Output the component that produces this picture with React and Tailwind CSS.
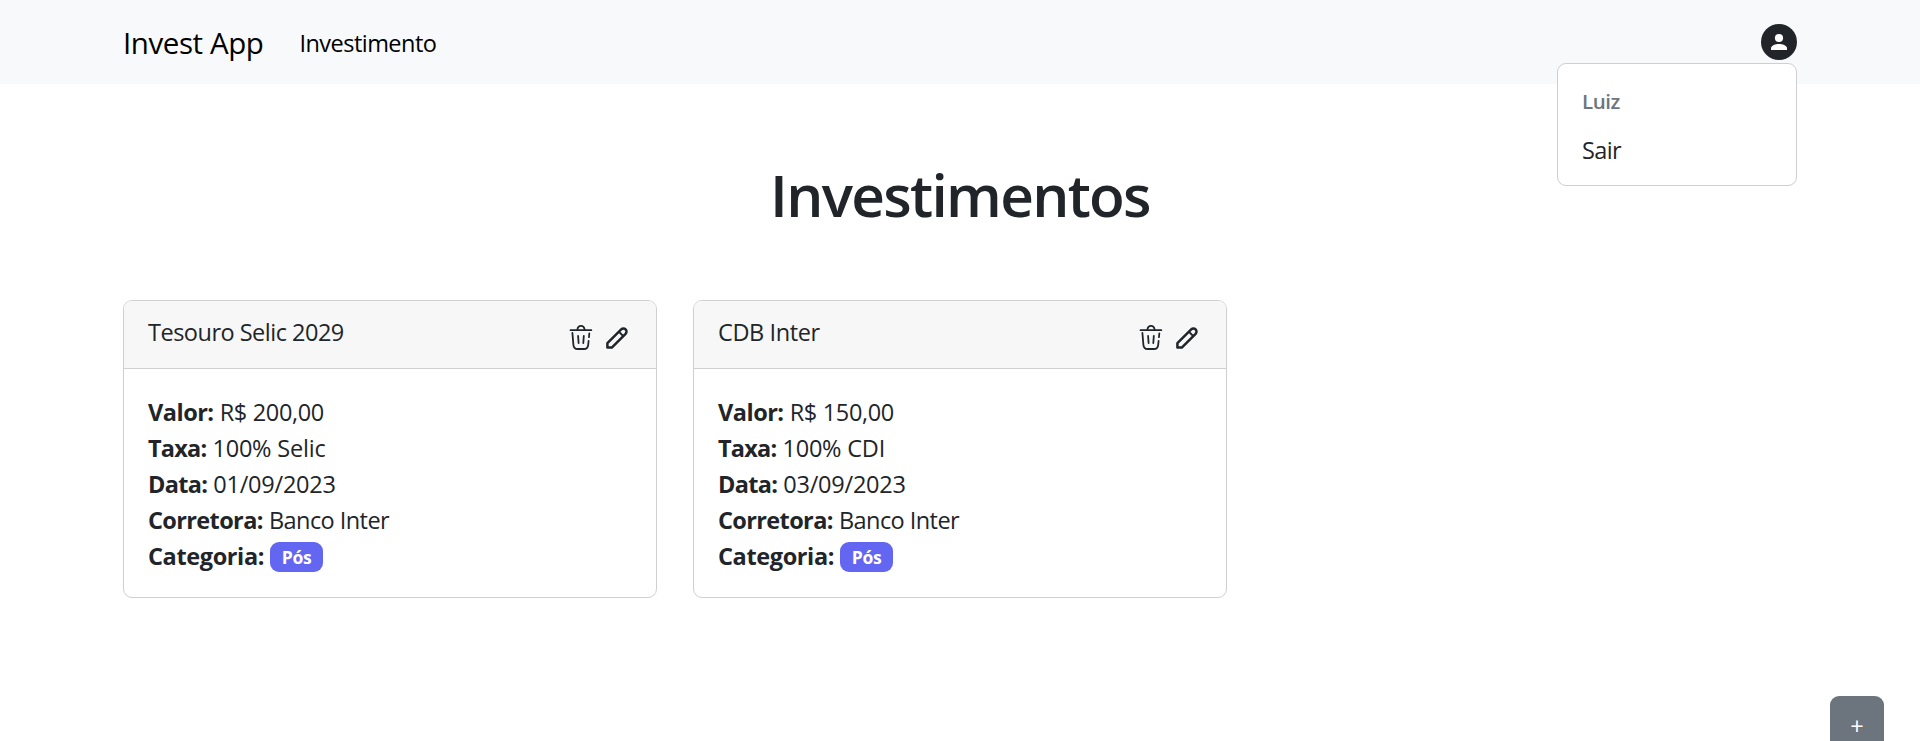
const investments = [
  {
    name: "Tesouro Selic 2029",
    nameTracking: "tracking-[-0.5px]",
    value: "R$ 200,00",
    rate: "100% Selic",
    date: "01/09/2023",
    broker: "Banco Inter",
    category: "Pós",
  },
  {
    name: "CDB Inter",
    nameTracking: "tracking-[-0.4px]",
    value: "R$ 150,00",
    rate: "100% CDI",
    date: "03/09/2023",
    broker: "Banco Inter",
    category: "Pós",
  },
];

function TrashIcon() {
  return (
    <svg className="h-7 w-6" viewBox="0 0 24 28" fill="none" stroke="currentColor" strokeWidth="1.8" strokeLinecap="round">
      <path d="M1.5 7.2H22.3" />
      <path d="M8.4 6.6C9 1.6 15 1.6 15.6 6.6" />
      <path d="M3.4 10L4.4 21.8C4.7 24.8 6 26 8.7 26H15C17.7 26 18.9 24.8 19.2 21.8L19.6 18" />
      <path d="M20.3 10.5L20 14.2" />
      <path d="M9.1 13L9.6 20M14.8 13L14.3 20" />
    </svg>
  );
}

function PencilIcon() {
  return (
    <svg className="h-6 w-6" viewBox="0 0 24 24" fill="none" stroke="currentColor" strokeWidth="2.5" strokeLinejoin="round">
      <path d="M2.4 21.6V17.2L16.2 3.4A3.1 3.1 0 0 1 20.6 7.8L6.8 21.6Z" />
      <path d="M13.8 5.6L18.4 10.2" strokeWidth="2" />
    </svg>
  );
}

function UserIcon() {
  return (
    <svg className="h-9 w-9" viewBox="0 0 36 36">
      <circle cx="18" cy="18" r="18" fill="#212529" />
      <circle cx="18" cy="14" r="4.1" fill="#fff" />
      <path d="M10 26v-1.8c0-2.9 4.6-4.3 8-4.3s8 1.4 8 4.3V26z" fill="#fff" />
    </svg>
  );
}

function Field({ label, tracking, children }) {
  return (
    <p className="h-9 whitespace-nowrap">
      <strong className={`font-bold ${tracking}`}>{label}</strong> {children}
    </p>
  );
}

function Card({ item }) {
  return (
    <article className="h-[298px] overflow-hidden rounded-[9px] border border-[#d0d0d0] bg-white">
      <header className="flex h-[68px] justify-between border-b border-[#d0d0d0] bg-[#f7f7f7] pt-[13px] pr-[27px] pl-6">
        <span className={item.nameTracking}>{item.name}</span>
        <span className="flex gap-3 pt-[9px]">
          <TrashIcon />
          <span className="pt-[3px]">
            <PencilIcon />
          </span>
        </span>
      </header>
      <div className="px-6 pt-[25px]">
        <Field label="Valor:" tracking="tracking-[-0.5px]">
          <span className="tracking-[-0.34px]">{item.value}</span>
        </Field>
        <Field label="Taxa:" tracking="tracking-[-0.8px]">
          <span className="tracking-[-0.2px]">{item.rate}</span>
        </Field>
        <Field label="Data:" tracking="tracking-[-0.7px]">
          <span className="tracking-[-0.23px]">{item.date}</span>
        </Field>
        <Field label="Corretora:" tracking="tracking-[-0.63px]">
          <span className="tracking-[-0.55px]">{item.broker}</span>
        </Field>
        <Field label="Categoria:" tracking="tracking-[-0.38px]">
          <span className="mt-1 inline-block h-[30px] w-[53px] rounded-[9px] bg-[#6366f1] text-center align-top text-[17.5px] leading-[31px] font-bold tracking-[-0.3px] text-white">
            {item.category}
          </span>
        </Field>
      </div>
    </article>
  );
}

export default function App() {
  return (
    <div className="h-[741px] overflow-hidden bg-white font-['Open_Sans','Noto_Sans',sans-serif] text-[23.5px] leading-9 font-normal text-[#212529]">
      <nav className="h-[84px] bg-[#f8f9fa]">
        <div className="mx-auto flex w-[1674px] items-start text-black">
          <a className="pt-5 text-[29.5px] leading-[45px] tracking-[-0.42px]">Invest App</a>
          <a className="pt-[25px] pl-9 tracking-[-0.53px]">Investimento</a>
          <div className="relative ml-auto pt-6">
            <UserIcon />
            <div className="absolute top-[63px] right-0 h-[123px] w-60 rounded-[9px] border border-[#cfcfcf] bg-white px-6 pt-[19px] text-[#212529]">
              <p className="text-[20.5px] font-semibold tracking-[-0.5px] text-[#6c757d]">Luiz</p>
              <p className="pt-[13px] tracking-[-0.6px]">Sair</p>
            </div>
          </div>
        </div>
      </nav>
      <main className="mx-auto w-[1674px]">
        <h1 className="pt-[74px] text-center text-[58.5px] leading-[72px] font-semibold tracking-[-1.7px]">Investimentos</h1>
        <section className="grid grid-cols-3 gap-9 pt-[70px]">
          {investments.map((item) => (
            <Card key={item.name} item={item} />
          ))}
        </section>
      </main>
      <button className="fixed top-[696px] right-9 flex h-[60px] w-[54px] justify-center rounded-[9px] bg-[#6c757d] pt-3 text-white">+</button>
    </div>
  );
}
